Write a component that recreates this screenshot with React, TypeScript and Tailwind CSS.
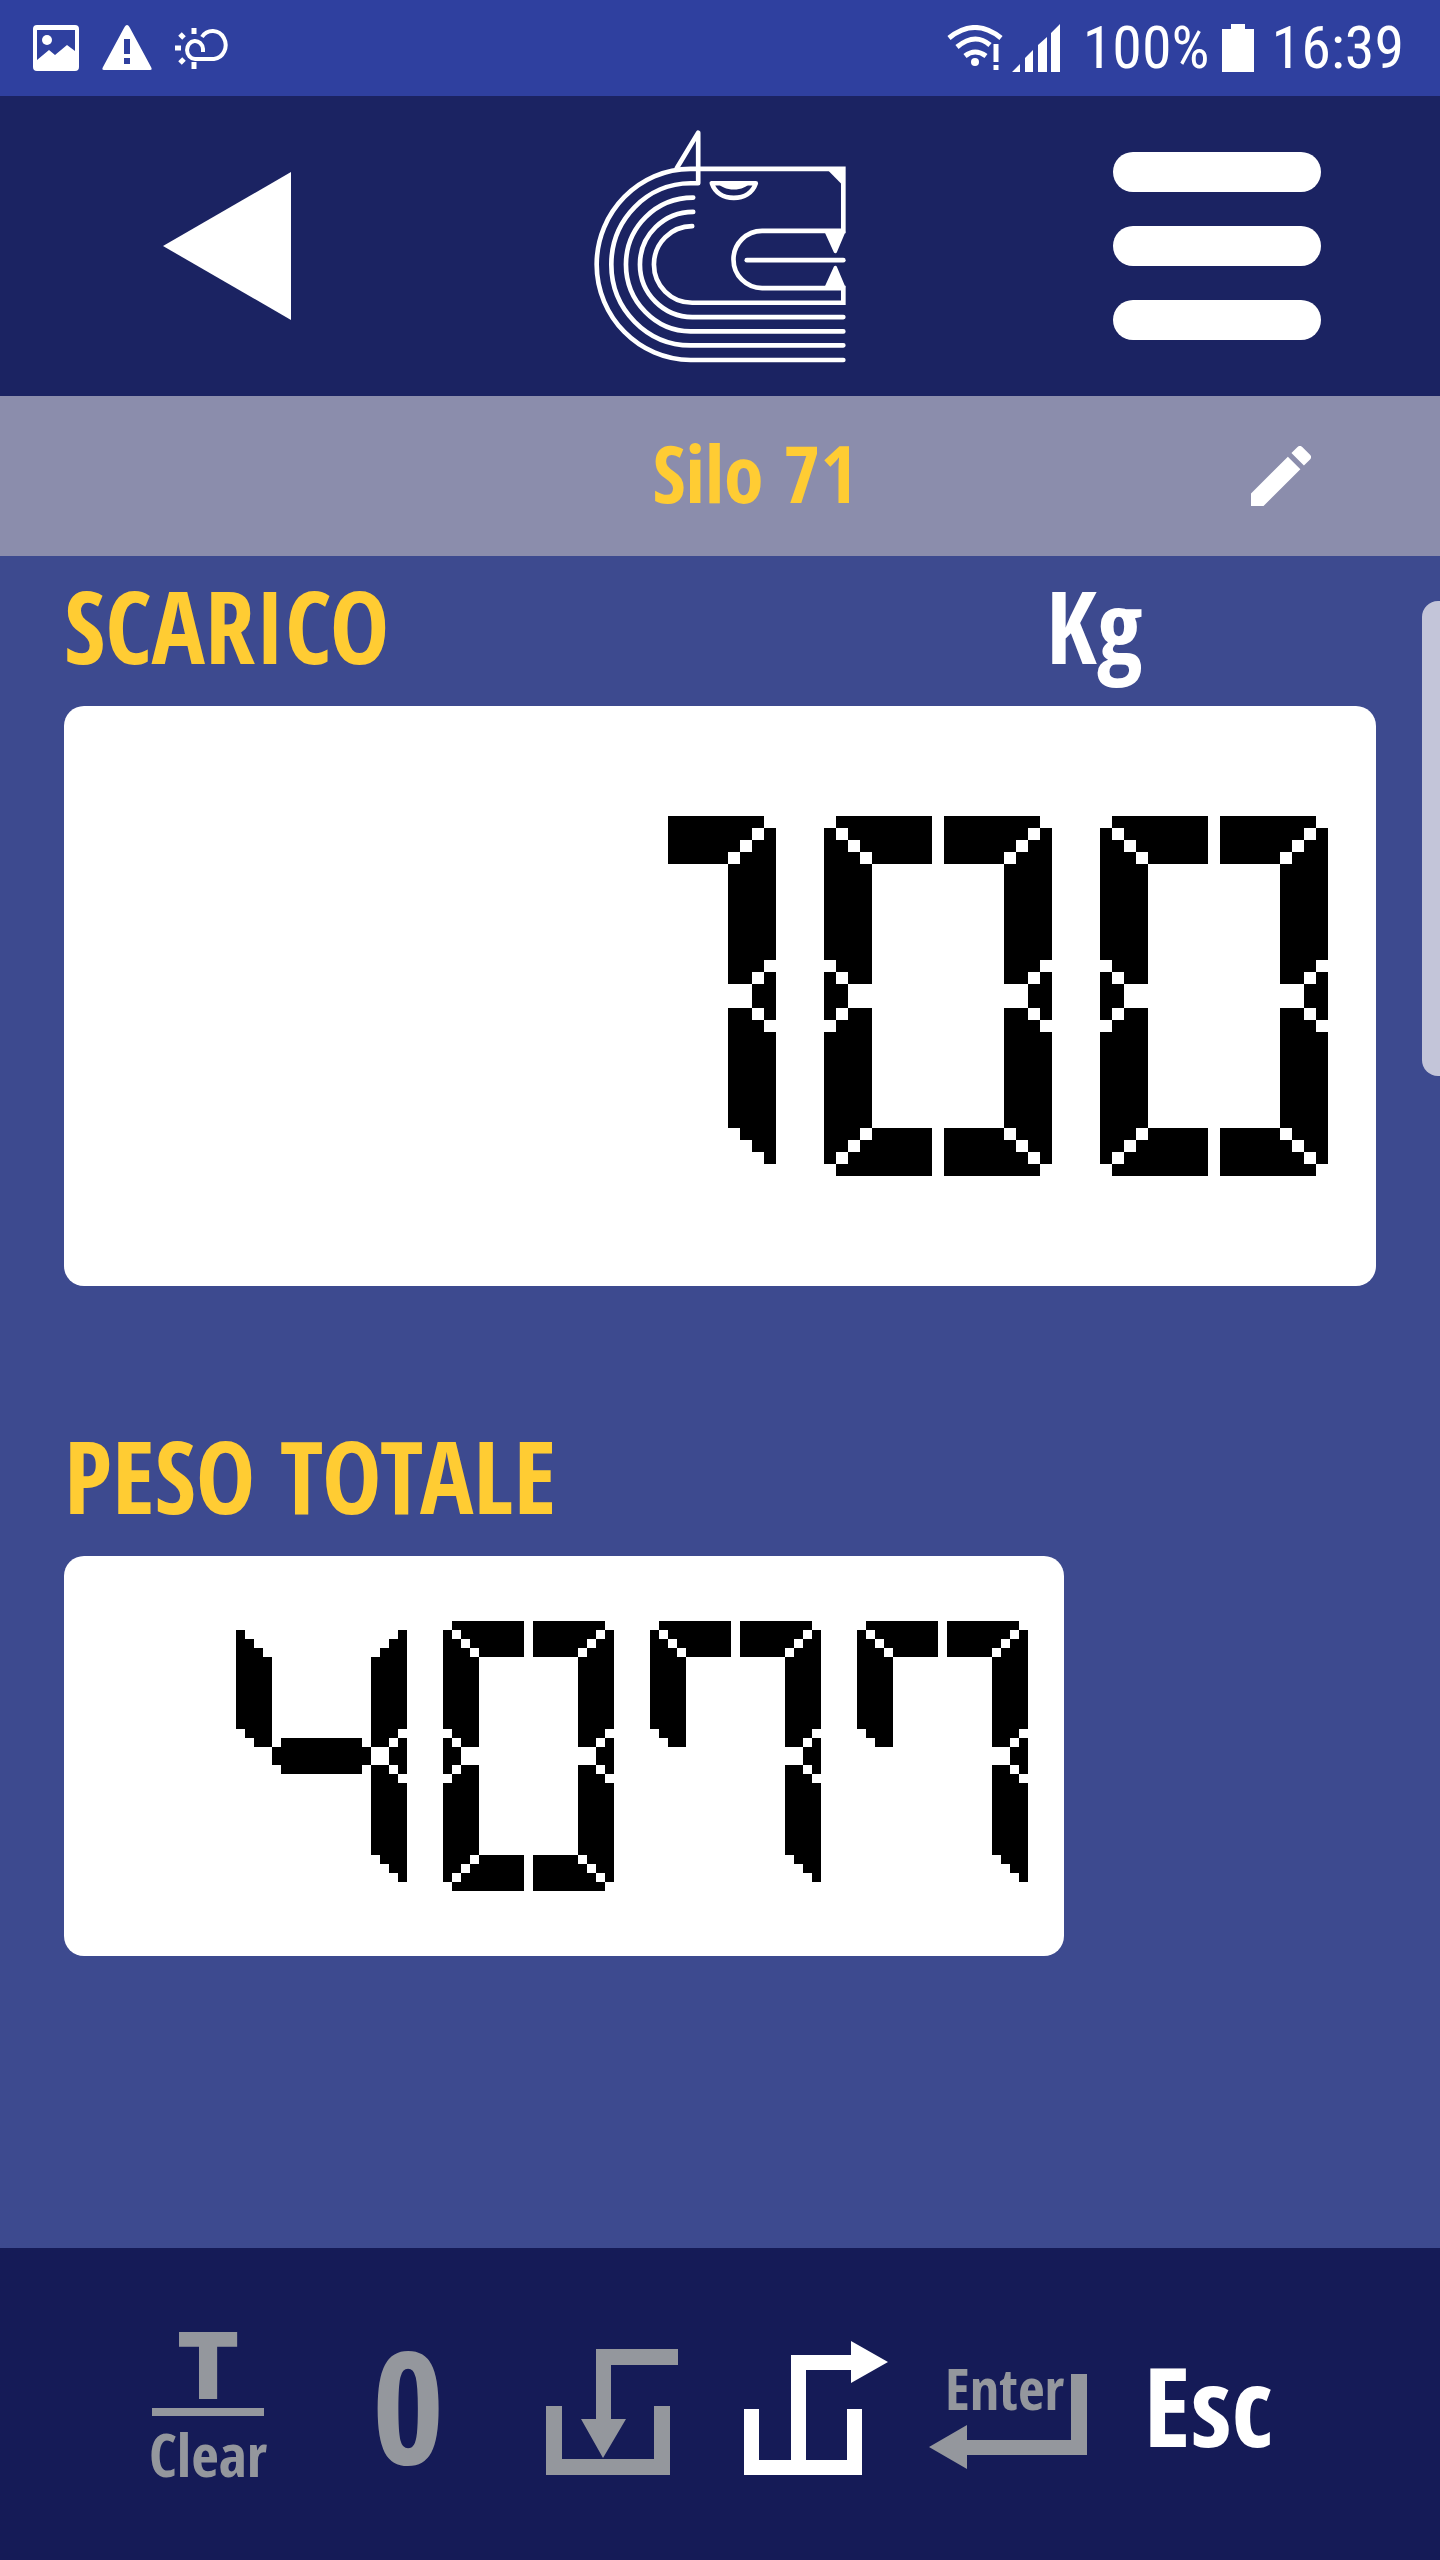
import type { ReactNode } from 'react'

type Rect = [x: number, y: number, w: number, h: number]

// one LCD digit is a 19x30 cell grid, each segment is a stack of rects
const SEGMENTS: Record<string, Rect[]> = {
  topLeft: [[1, 0, 8, 1], [2, 1, 7, 1], [3, 2, 6, 1], [4, 3, 5, 1]],
  topRight: [[10, 0, 8, 1], [10, 1, 7, 1], [10, 2, 6, 1], [10, 3, 5, 1]],
  upperLeft: [[0, 1, 1, 1], [0, 2, 2, 1], [0, 3, 3, 1], [0, 4, 4, 8], [1, 12, 3, 1], [2, 13, 2, 1]],
  upperRight: [[18, 1, 1, 1], [17, 2, 2, 1], [16, 3, 3, 1], [15, 4, 4, 8], [15, 12, 3, 1], [15, 13, 2, 1]],
  dotLeft: [[0, 13, 1, 4], [1, 14, 1, 2]],
  dotRight: [[18, 13, 1, 4], [17, 14, 1, 2]],
  middle: [[4, 14, 11, 2], [5, 13, 9, 4]],
  lowerLeft: [[2, 16, 2, 1], [1, 17, 3, 1], [0, 18, 4, 8], [0, 26, 3, 1], [0, 27, 2, 1], [0, 28, 1, 1]],
  lowerRight: [[15, 16, 2, 1], [15, 17, 3, 1], [15, 18, 4, 8], [16, 26, 3, 1], [17, 27, 2, 1], [18, 28, 1, 1]],
  bottomLeft: [[4, 26, 5, 1], [3, 27, 6, 1], [2, 28, 7, 1], [1, 29, 8, 1]],
  bottomRight: [[10, 26, 5, 1], [10, 27, 6, 1], [10, 28, 7, 1], [10, 29, 8, 1]],
}

const DIGITS: Record<string, string[]> = {
  '0': ['topLeft', 'topRight', 'upperLeft', 'upperRight', 'dotLeft', 'dotRight', 'lowerLeft', 'lowerRight', 'bottomLeft', 'bottomRight'],
  '1': ['topRight', 'upperRight', 'dotRight', 'lowerRight'],
  '4': ['upperLeft', 'upperRight', 'middle', 'dotRight', 'lowerRight'],
  '7': ['topLeft', 'topRight', 'upperLeft', 'upperRight', 'dotRight', 'lowerRight'],
}

type LcdProps = {
  value: string
  className: string
}

function Lcd({ value, className }: LcdProps) {
  return (
    <svg
      role="img"
      aria-label={value}
      viewBox={`0 0 ${value.length * 23 - 4} 30`}
      shapeRendering="crispEdges"
      className={className}
    >
      {value.split('').map((d, i) => (
        <g key={i} transform={`translate(${i * 23} 0)`}>
          {DIGITS[d].flatMap((s) =>
            SEGMENTS[s].map(([x, y, w, h]) => <rect key={`${s}${x}-${y}`} x={x} y={y} width={w} height={h} />),
          )}
        </g>
      ))}
    </svg>
  )
}

function StatusBar() {
  return (
    <div className="flex h-24 items-center justify-between bg-[#2f409f] pr-9 pl-8 text-white">
      <div className="flex items-center gap-[22px]">
        <svg viewBox="0 0 48 46" className="h-[46px] w-12" fill="currentColor">
          <path
            fillRule="evenodd"
            d="M5 0h38a4 4 0 0 1 4 4v38a4 4 0 0 1-4 4H5a4 4 0 0 1-4-4V4a4 4 0 0 1 4-4zM5 5v30l12-10 6 5 12-10 8 6V5z"
          />
          <circle cx="15" cy="15" r="5" />
        </svg>
        <svg viewBox="0 0 50 46" className="h-[46px] w-[50px]" fill="currentColor">
          <path fillRule="evenodd" d="M25 0c1 0 2 1 3 3l21 39c1 2 1 3-1 3H2c-2 0-2-1-1-3L22 3c1-2 2-3 3-3zM22 14v15h6V14zM22 33v6h6v-6z" />
        </svg>
        <svg viewBox="0 0 54 42" className="h-[42px] w-[54px]" fill="none" stroke="currentColor" strokeWidth="4">
          <path d="M29 25v-3a8 9 0 1 0-8 10h19a13 14 0 1 0-12-22" />
          <path d="M20 1v6M20 35v7M1 21h6M6 7l4 4M6 36l4-4" strokeWidth="5" />
        </svg>
      </div>
      <div className="flex items-center font-['Roboto_Condensed','Roboto',sans-serif] text-[60px] leading-none">
        <svg viewBox="0 0 56 46" className="h-[46px] w-14" fill="none" stroke="currentColor" strokeWidth="5">
          <path d="M2 13q26-21 52 0M10 22q18-15 33-2M18 31q10-8 21 0" />
          <circle cx="28" cy="37" r="4" fill="currentColor" stroke="none" />
          <path d="M49 19v18M49 40v5" />
        </svg>
        <svg viewBox="0 0 50 48" className="ml-2 h-12 w-[50px]" fill="currentColor">
          <path d="M1 48l8-8v8zM14 48V34l8-8v22zM27 48V21l9-8v35zM40 48V9l9-9v48z" />
        </svg>
        <span className="ml-[22px]">100%</span>
        <svg viewBox="0 0 32 48" className="ml-3 h-12 w-8" fill="currentColor">
          <path d="M9 0h14v5h9v43H0V5h9z" />
        </svg>
        <span className="ml-[18px]">16:39</span>
      </div>
    </div>
  )
}

function Logo() {
  return (
    <svg
      viewBox="70 58 757 700"
      className="h-[233px] w-[252px]"
      fill="none"
      stroke="#fff"
      strokeWidth="14"
      strokeLinecap="round"
    >
      <path d="M819 749H360C206 749 78 620 78 462S206 175 360 175H819V361H575a86 86 0 0 0 0 172H819V577H365a114 114 0 0 1 0-230" />
      <path d="M319 172L383 66V218H360C230 218 122 327 122 462S230 705 360 705H819" strokeLinejoin="round" />
      <path d="M368 261C256 261 166 350 166 462S256 663 360 663H819" />
      <path d="M368 304C280 304 208 374 208 462S280 620 365 620H819" />
      <path d="M529 449H819" />
      <path d="M424 218H556C546 248 520 262 490 262S434 248 424 218z" strokeLinejoin="round" />
      <path d="M440 214H540C524 244 456 244 440 214z" fill="#fff" stroke="none" />
      <path d="M775 181L812 219V181z" fill="#fff" stroke="none" />
      <path d="M768 364H820L795 423zM768 530H820L795 471z" fill="#fff" strokeWidth="10" strokeLinejoin="round" />
    </svg>
  )
}

function Header() {
  return (
    <header className="flex h-[300px] items-center bg-[#1b2362]">
      <div className="flex-1">
        <button type="button" aria-label="Back" className="ml-[163px] block">
          <svg viewBox="0 0 128 148" className="h-[148px] w-32" fill="#fff">
            <path d="M128 0v148L0 74z" />
          </svg>
        </button>
      </div>
      <Logo />
      <div className="flex flex-1 justify-end">
        <button type="button" aria-label="Menu" className="mr-[119px] flex flex-col gap-[34px]">
          <span className="h-10 w-52 rounded-full bg-white" />
          <span className="h-10 w-52 rounded-full bg-white" />
          <span className="h-10 w-52 rounded-full bg-white" />
        </button>
      </div>
    </header>
  )
}

type KeyProps = {
  label: string
  active?: boolean
  children: ReactNode
}

function Key({ label, active, children }: KeyProps) {
  return (
    <button
      type="button"
      aria-label={label}
      className={`flex flex-col items-center justify-center font-bold ${active ? 'text-white' : 'text-[#94979d]'}`}
    >
      {children}
    </button>
  )
}

function Keypad() {
  return (
    <footer className="grid h-[312px] grid-cols-6 bg-[#151b57] pt-2 pr-[132px] pl-[108px] leading-none">
      <Key label="Clear">
        <span className="font-['Inter',sans-serif] text-[92px] leading-[68px] font-black">T</span>
        <span className="mt-2 h-2 w-28 bg-current" />
        <span className="mt-2 text-[60px]">Clear</span>
      </Key>
      <Key label="0">
        <span className="pb-2 text-[156px]">0</span>
      </Key>
      <Key label="Load">
        <svg viewBox="0 0 132 126" className="mt-2 ml-2 h-[126px] w-[132px]" fill="currentColor">
          <path d="M0 57h16v53h92V57h16v69H0z" />
          <path d="M50 0h82v16H65v54h15L57 109 35 70h15z" />
        </svg>
      </Key>
      <Key label="Unload" active>
        <svg viewBox="0 0 144 134" className="ml-4 h-[134px] w-36" fill="currentColor">
          <path d="M0 68h15v51h32V14h60V0l37 21-37 21V29H62v90h41V68h15v66H0z" />
        </svg>
      </Key>
      <Key label="Enter">
        <div className="relative mt-4 h-[106px] w-[158px]">
          <span className="absolute -top-1 left-4 text-[58px]">Enter</span>
          <svg viewBox="0 0 158 106" className="h-full w-full" fill="currentColor">
            <path d="M142 11h16v81H38v14L0 84l38-22v15h104z" />
          </svg>
        </div>
      </Key>
      <Key label="Esc" active>
        <span className="pb-2 text-[110px]">Esc</span>
      </Key>
    </footer>
  )
}

export default function App() {
  return (
    <div className="relative flex min-h-screen flex-col bg-[#3d4a8f] font-['Open_Sans_Condensed','Noto_Sans_Condensed','Roboto_Condensed','Liberation_Sans_Narrow',sans-serif]">
      <StatusBar />
      <Header />
      <div className="flex h-40 items-center bg-[#8b8dac] pr-[129px] pl-[259px]">
        <h1 className="flex-1 pb-2 text-center text-[80px] leading-none font-bold text-[#ffcc33]">Silo 71</h1>
        <button type="button" aria-label="Edit">
          <svg viewBox="3 3 18 18" className="size-[60px]" fill="#fff">
            <path d="M3 17.25V21h3.75L17.81 9.94l-3.75-3.75L3 17.25zM20.71 7.04a1 1 0 0 0 0-1.41l-2.34-2.34a1 1 0 0 0-1.41 0l-1.83 1.83 3.75 3.75 1.83-1.83z" />
          </svg>
        </button>
      </div>

      <main className="flex-1 px-16">
        <section>
          <div className="flex h-[150px] items-center justify-between pb-3 text-[100px] leading-none font-bold">
            <h2 className="text-[#ffcc33]">SCARICO</h2>
            <span className="w-[330px] text-white">Kg</span>
          </div>
          <div className="flex h-[580px] items-center justify-end rounded-[20px] bg-white pr-12">
            <Lcd value="100" className="h-[360px] w-[780px]" />
          </div>
        </section>
        <section className="mt-[120px]">
          <h2 className="flex h-[150px] items-center pb-3 text-[100px] leading-none font-bold text-[#ffcc33]">
            PESO TOTALE
          </h2>
          <div className="flex h-[400px] w-[1000px] max-w-full items-center justify-end rounded-[20px] bg-white pr-9">
            <Lcd value="4077" className="h-[270px] w-[792px]" />
          </div>
        </section>
      </main>

      <Keypad />

      {/* edge panel handle floating over the page */}
      <div className="absolute top-[601px] right-0 h-[475px] w-[18px] rounded-l-2xl bg-[#c3c5d9]" />
    </div>
  )
}
